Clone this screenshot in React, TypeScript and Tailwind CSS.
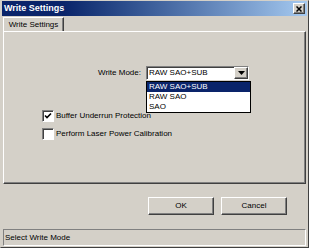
import React from "react";

const font = { fontFamily: '"Liberation Sans", Arial, sans-serif' };

const Raised = "border border-t-white border-l-white border-r-[#404040] border-b-[#404040] shadow-[inset_-1px_-1px_0_#808080]";
const Sunken = "border border-t-[#808080] border-l-[#808080] border-r-white border-b-white shadow-[inset_1px_1px_0_#404040]";

const Checkbox = ({ checked }: { checked?: boolean }) => (
  <div className={`w-[12px] h-[12px] bg-white ${Sunken} flex items-center justify-center`}>
    {checked && (
      <svg width="8" height="8" viewBox="0 0 8 8">
        <path d="M1 3.5 L3 5.5 L7 1.5" stroke="#000" strokeWidth="1.6" fill="none" />
      </svg>
    )}
  </div>
);

const modes = ["RAW SAO+SUB", "RAW SAO", "SAO"];

export default function App() {
  return (
    <div style={font} className="w-[309px] h-[248px] bg-[#d4d0c8] border border-t-[#d4d0c8] border-l-[#d4d0c8] border-r-[#404040] border-b-[#404040] flex flex-col text-[8px] text-black overflow-hidden">
      {/* title bar */}
      <div className="h-[15px] mx-[1px] bg-gradient-to-r from-[#0a246a] from-20% to-[#a6caf0] flex items-center justify-between pl-[2px] pr-[2px]">
        <span className="text-white font-bold text-[9px] leading-none">Write Settings</span>
        <div className={`w-[12px] h-[11px] bg-[#d4d0c8] ${Raised} flex items-center justify-center`}>
          <svg width="6" height="6" viewBox="0 0 6 6">
            <path d="M0.5 0.5 L5.5 5.5 M5.5 0.5 L0.5 5.5" stroke="#000" strokeWidth="1.5" />
          </svg>
        </div>
      </div>

      {/* tabs */}
      <div className="pl-[2px] pr-[2px] mt-[1px] flex flex-col">
        <div className="flex">
          <div className="h-[15px] w-[61px] border-t border-l border-r border-t-white border-l-white border-r-[#404040] shadow-[inset_-1px_0_0_#808080] flex items-center justify-center leading-none">
            Write Settings
          </div>
        </div>
        <div className="h-[153px] -mt-[1px] border border-t-white border-l-white border-r-[#404040] border-b-[#404040] shadow-[inset_-1px_-1px_0_#808080]">
          <div className="flex items-center mt-[34px] ml-[90px] relative">
            <span className="w-[47px] text-right leading-none">Write Mode:</span>
            <div className="relative ml-[5px]">
              <div className={`w-[103px] h-[14px] bg-white ${Sunken} flex items-center justify-between pl-[2px]`}>
                <span className="leading-none">RAW SAO+SUB</span>
                <div className={`w-[14px] h-[12px] bg-[#d4d0c8] ${Raised} flex items-center justify-center`}>
                  <svg width="7" height="4" viewBox="0 0 7 4">
                    <path d="M0 0 H7 L3.5 4 Z" fill="#000" />
                  </svg>
                </div>
              </div>
              <div className="absolute left-0 top-[15px] w-[105px] bg-white border border-black flex flex-col z-10">
                {modes.map((m, i) => (
                  <div
                    key={m}
                    className={`h-[10px] pl-[2px] flex items-center leading-none ${i === 0 ? "bg-[#0a246a] text-white" : ""}`}
                  >
                    {m}
                  </div>
                ))}
              </div>
            </div>
          </div>

          <div className="mt-[30px] ml-[38px] flex flex-col gap-[6px]">
            <div className="flex items-center gap-[2px]">
              <Checkbox checked />
              <span className="leading-none">Buffer Underrun Protection</span>
            </div>
            <div className="flex items-center gap-[2px]">
              <Checkbox />
              <span className="leading-none">Perform Laser Power Calibration</span>
            </div>
          </div>
        </div>
      </div>

      {/* buttons */}
      <div className="flex justify-end gap-[7px] mt-[13px] pr-[21px]">
        <button className={`w-[66px] h-[18px] bg-[#d4d0c8] ${Raised} leading-none text-[8px]`}>OK</button>
        <button className={`w-[66px] h-[18px] bg-[#d4d0c8] ${Raised} leading-none text-[8px]`}>Cancel</button>
      </div>

      {/* status bar */}
      <div className="mt-[14px] mx-[2px] h-[17px] border border-t-[#808080] border-l-[#808080] border-r-white border-b-white flex items-center pl-[1px] leading-none">
        Select Write Mode
      </div>
    </div>
  );
}
